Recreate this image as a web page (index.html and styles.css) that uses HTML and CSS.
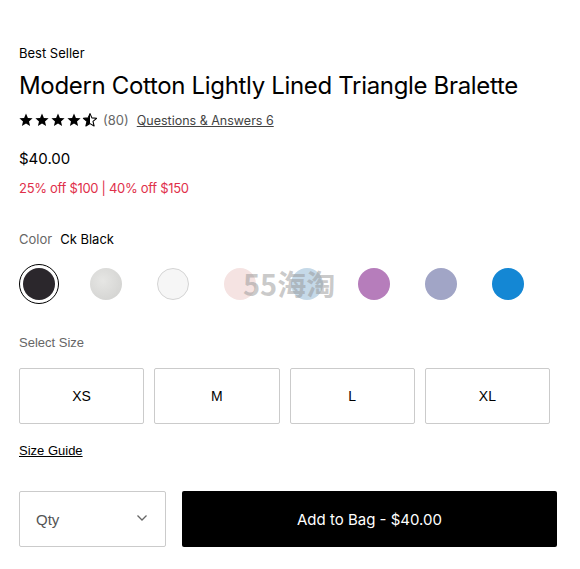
FILE: index.html
```html
<!DOCTYPE html>
<html>
<head>
<meta charset="utf-8">
<link rel="stylesheet" href="styles.css">
</head>
<body>
<div class="page">
  <div class="badge">Best Seller</div>
  <h1 class="title">Modern Cotton Lightly Lined Triangle Bralette</h1>
  <div class="rating">
    <div class="stars">
      <svg width="78" height="14" viewBox="0 0 78 14">
        <defs>
          <path id="st" d="M7 0.6l1.9 4.3 4.7 0.4-3.6 3.1 1.1 4.6L7 10.6 2.9 13l1.1-4.6L0.4 5.3l4.7-0.4z"/>
        </defs>
        <use href="#st" x="0" fill="#000"/>
        <use href="#st" x="16" fill="#000"/>
        <use href="#st" x="32" fill="#000"/>
        <use href="#st" x="48" fill="#000"/>
        <g transform="translate(64 0)">
          <path d="M7 0.6l1.9 4.3 4.7 0.4-3.6 3.1 1.1 4.6L7 10.6 2.9 13l1.1-4.6L0.4 5.3l4.7-0.4z" fill="none" stroke="#000" stroke-width="1.1" stroke-linejoin="round"/>
          <path d="M7 0.6L7 10.6 2.9 13l1.1-4.6L0.4 5.3l4.7-0.4z" fill="#000"/>
        </g>
      </svg>
    </div>
    <span class="count">(80)</span>
    <a class="qa">Questions &amp; Answers 6</a>
  </div>
  <div class="price">$40.00</div>
  <div class="promo">25% off $100 | 40% off $150</div>
  <div class="color-label"><span class="muted">Color</span><span class="color-name">Ck Black</span></div>
  <div class="swatches">
    <div class="swatch selected"><span class="dot c1"></span></div>
    <div class="swatch"><span class="dot c2"></span></div>
    <div class="swatch"><span class="dot c3"></span></div>
    <div class="swatch"><span class="dot c4"></span></div>
    <div class="swatch"><span class="dot c5"></span></div>
    <div class="swatch"><span class="dot c6"></span></div>
    <div class="swatch"><span class="dot c7"></span></div>
    <div class="swatch"><span class="dot c8"></span></div>
    <span class="watermark">55海淘</span>
  </div>
  <div class="size-label">Select Size</div>
  <div class="sizes">
    <div class="size">XS</div>
    <div class="size">M</div>
    <div class="size">L</div>
    <div class="size">XL</div>
  </div>
  <a class="guide">Size Guide</a>
  <div class="actions">
    <div class="qty">
      <span>Qty</span>
      <svg width="12" height="8" viewBox="0 0 12 8"><path d="M1.5 1.5L6 6l4.5-4.5" fill="none" stroke="#666" stroke-width="1.3"/></svg>
    </div>
    <div class="add">Add to Bag - $40.00</div>
  </div>
</div>
</body>
</html>
```

FILE: styles.css
```css
* { box-sizing: border-box; }
html, body { margin: 0; padding: 0; background: #fff; }
body {
  font-family: Inter, "Noto Sans", sans-serif;
  color: #000;
  width: 580px;
  height: 569px;
  overflow: hidden;
}
.page {
  padding: 45px 23px 0 19px;
  display: flex;
  flex-direction: column;
}
.badge {
  font-size: 13px;
  line-height: 16px;
}
.title {
  margin: 10px 0 0;
  font-size: 24px;
  font-weight: 400;
  line-height: 30px;
  letter-spacing: -0.33px;
}
.rating {
  margin-top: 9px;
  display: flex;
  align-items: center;
  height: 20px;
  font-size: 13px;
}
.stars { display: flex; align-items: center; height: 14px; }
.stars svg { display: block; }
.count { color: #666; margin-left: 6px; }
.qa { color: #444; text-decoration: underline; margin-left: 8px; font-size: 12.5px; }
.price {
  margin-top: 19px;
  font-size: 15px;
  line-height: 20px;
}
.promo {
  margin-top: 9px;
  font-size: 13px;
  line-height: 20px;
  letter-spacing: -0.3px;
  color: #e0304a;
}
.color-label {
  margin-top: 31px;
  font-size: 13px;
  line-height: 20px;
}
.muted { color: #666; }
.color-name { margin-left: 8px; }
.swatches {
  position: relative;
  margin-top: 15px;
  display: flex;
  gap: 27px;
  height: 40px;
}
.swatch {
  width: 40px;
  height: 40px;
  border-radius: 50%;
  display: flex;
  align-items: center;
  justify-content: center;
}
.swatch.selected { border: 1.5px solid #000; }
.dot {
  width: 32px;
  height: 32px;
  border-radius: 50%;
  display: block;
}
.c1 { background: #2b272c; }
.c2 { background: radial-gradient(circle at 40% 40%, #e6e6e4, #cfcfcd); }
.c3 { background: #f6f6f6; border: 1px solid #d4d4d4; }
.c4 { background: #f5e3e2; }
.c5 { background: #c5d9e8; }
.c6 { background: #b67dbb; }
.c7 { background: #a1a5c6; }
.c8 { background: #1487d4; }
.watermark {
  position: absolute;
  left: 224px;
  top: 1px;
  font-family: "Noto Sans CJK SC", Inter, sans-serif;
  font-size: 29px;
  font-weight: 700;
  line-height: 36px;
  color: rgba(150, 150, 150, 0.5);
  letter-spacing: 0;
}
.size-label {
  margin-top: 29px;
  font-family: "Liberation Sans", Arial, sans-serif;
  font-size: 13px;
  line-height: 20px;
  color: #666;
}
.sizes {
  margin-top: 15px;
  width: 531px;
  display: grid;
  grid-template-columns: repeat(4, 1fr);
  gap: 10px;
}
.size {
  height: 56px;
  border: 1px solid #cbcbcb;
  border-radius: 2px;
  display: flex;
  align-items: center;
  justify-content: center;
  font-family: "Liberation Sans", Arial, sans-serif;
  font-size: 14px;
}
.guide {
  margin-top: 17px;
  align-self: flex-start;
  font-family: "Liberation Sans", Arial, sans-serif;
  font-size: 13px;
  line-height: 20px;
  text-decoration: underline;
  color: #000;
}
.actions {
  margin-top: 30px;
  display: flex;
  gap: 16px;
}
.qty {
  width: 147px;
  height: 56px;
  border: 1px solid #cbcbcb;
  border-radius: 2px;
  display: flex;
  align-items: center;
  justify-content: space-between;
  padding: 0 17px 0 16px;
  font-family: "Liberation Sans", Arial, sans-serif;
  font-size: 15px;
  color: #555;
}
.qty svg { margin-top: -2px; }
.add {
  width: 375px;
  height: 56px;
  background: #000;
  border-radius: 2px;
  color: #fff;
  display: flex;
  align-items: center;
  justify-content: center;
  font-size: 15px;
}
```
